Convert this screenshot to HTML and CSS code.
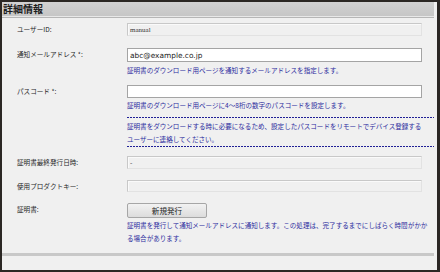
FILE: index.html
```html
<!DOCTYPE html>
<html>

<head>
    <meta charset="UTF-8">
    <title>詳細情報</title>
    <link rel="stylesheet" href="styles.css">
</head>

<body>
    <div class="panel">
        <div class="panel-head">
            <h2>詳細情報</h2>
        </div>
        <div class="form">
            <div class="row row-user">
                <label>ユーザーID:</label>
                <div class="field">
                    <input class="box box-off serif" type="text" value="manual" disabled>
                </div>
            </div>
            <div class="row row-mail">
                <label>通知メールアドレス *:</label>
                <div class="field">
                    <input class="box" type="text" value="abc@example.co.jp">
                    <p class="help">証明書のダウンロード用ページを通知するメールアドレスを指定します。</p>
                </div>
            </div>
            <div class="row row-code">
                <label>パスコード *:</label>
                <div class="field">
                    <input class="box" type="password" value="">
                    <p class="help help-code">証明書のダウンロード用ページに4～8桁の数字のパスコードを設定します。</p>
                    <div class="note">
                        <p class="help">証明書をダウンロードする時に必要になるため、設定したパスコードをリモートでデバイス登録する<br>ユーザーに連絡してください。</p>
                    </div>
                </div>
            </div>
            <div class="row row-date">
                <label>証明書最終発行日時:</label>
                <div class="field">
                    <input class="box box-off serif" type="text" value="-" disabled>
                </div>
            </div>
            <div class="row row-key">
                <label>使用プロダクトキー:</label>
                <div class="field">
                    <input class="box box-off" type="text" value="" disabled>
                </div>
            </div>
            <div class="row row-cert">
                <label>証明書:</label>
                <div class="field">
                    <button class="btn" type="button">新規発行</button>
                    <p class="help help-cert">証明書を発行して通知メールアドレスに通知します。この処理は、完了するまでにしばらく時間がかか<br>る場合があります。</p>
                </div>
            </div>
        </div>
        <div class="panel-foot"></div>
    </div>
</body>

</html>
```

FILE: styles.css
```css
body {
    margin: 0;
    font-family: "Noto Sans CJK JP", "Liberation Sans", sans-serif;
    background: #f0f0f0;
    color: #333;
}

.panel {
    box-sizing: border-box;
    width: 440px;
    height: 272px;
    border: 2px solid #2b2724;
    border-right-width: 3px;
    padding-right: 3px;
    background: #f0f0f0;
    display: flex;
    flex-direction: column;
}

.panel-head {
    height: 14px;
    background: linear-gradient(#d2d2d2, #c6c6c6);
    border-bottom: 1px solid #e8e8e8;
    box-shadow: 0 1px 0 #b6b6b6;
}

.panel-head h2 {
    margin: 0;
    padding-left: 1px;
    font-size: 10px;
    line-height: 14px;
    font-weight: 700;
    color: #1e1e1e;
}

.form {
    padding-left: 15px;
}

.row {
    display: flex;
    align-items: flex-start;
}

.row label {
    width: 110px;
    flex: none;
    font-size: 6.6px;
    line-height: 12px;
    color: #1f1f1f;
    white-space: nowrap;
}

.field {
    flex: 1;
}

.box {
    display: block;
    box-sizing: border-box;
    width: 295px;
    height: 14px;
    margin: 0;
    padding: 0 2px;
    border: 1px solid #a4a4a4;
    border-radius: 0;
    background: #fff;
    font-family: "DejaVu Sans", "Liberation Sans", sans-serif;
    font-size: 7.4px;
    color: #222;
    outline: none;
}

.box-off {
    height: 13px;
    background: #f0f0f0;
    border-color: #c8c8c8 #e2e2e2 #e2e2e2 #c8c8c8;
    box-shadow: inset 1px 1px 0 #fafafa;
    color: #333;
}

.serif {
    font-family: "Liberation Serif", serif;
    font-size: 7px;
}

.help {
    margin: 2px 0 0;
    font-size: 6.55px;
    line-height: 13px;
    color: #2c2c9e;
    white-space: nowrap;
}

.help-code {
    margin-top: 1px;
}

/* 点線の区切り */
.note {
    margin-top: 5px;
    padding: 3px 0 1px;
    background-image:
        repeating-linear-gradient(to right, #1f1f96 0 2px, transparent 2px 3px),
        repeating-linear-gradient(to right, #1f1f96 0 2px, transparent 2px 3px);
    background-size: 100% 1px, 100% 1px;
    background-position: left top, left bottom;
    background-repeat: no-repeat;
}

.note .help {
    margin: 0;
}

.btn {
    display: block;
    box-sizing: border-box;
    width: 80px;
    height: 15px;
    padding: 0;
    border: 1px solid #a6a6a6;
    border-radius: 2px;
    background: linear-gradient(#f2f2f2, #dcdcdc);
    font-family: "Noto Sans CJK JP", sans-serif;
    font-size: 7.6px;
    line-height: 13px;
    color: #222;
}

.help-cert {
    margin-top: 1px;
}

.row-user {
    margin-top: 6px;
}

.row-user .box {
    height: 13px;
}

.row-mail {
    margin-top: 12px;
}

.row-code {
    margin-top: 8px;
}

.row-code .box {
    height: 13px;
}

.row-date {
    margin-top: 9px;
}

.row-key {
    margin-top: 11px;
}

.row-key .box {
    height: 12px;
}

.row-cert {
    margin-top: 11px;
}

.panel-foot {
    margin-top: auto;
    height: 14px;
    border-top: 3px solid #c8c8c8;
}
```
